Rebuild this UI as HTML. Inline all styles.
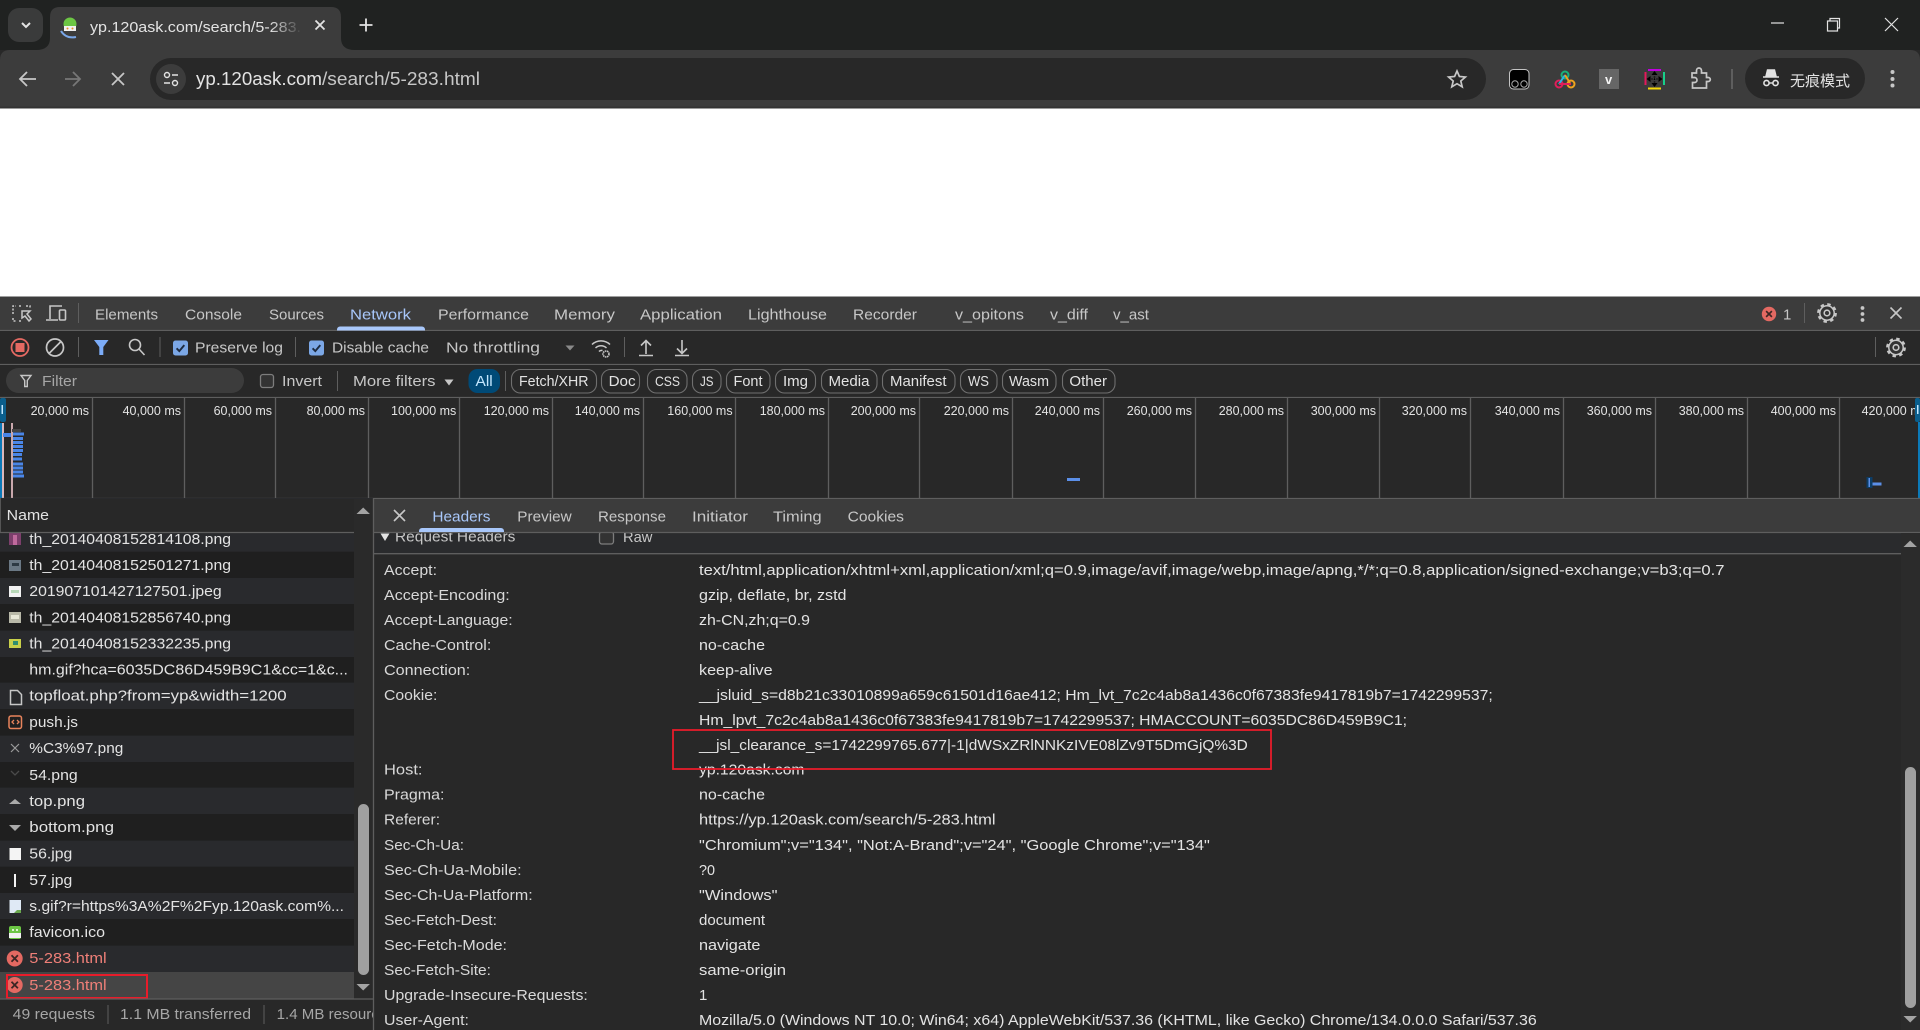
<!DOCTYPE html>
<html lang="zh-CN"><head><meta charset="utf-8"><title>yp.120ask.com/search/5-283.html</title>
<style>
html,body{margin:0;padding:0;background:#282828;width:1920px;height:1030px;overflow:hidden}
svg{display:block}
text{font-family:"Liberation Sans","Noto Sans CJK SC",sans-serif;font-size:15px;fill:#e3e3e3;white-space:pre}
.t{fill:#c7c7c7}
.l{font-size:13px}
.n{fill:#d8d8d8}
.g{fill:#a6a6a6}
.r{fill:#ee7f78}
.ln{stroke:#5e5e5e;stroke-width:1.3;fill:none}
.ic{stroke:#c7c7c7;stroke-width:1.6;fill:none}
</style></head><body>
<svg xmlns="http://www.w3.org/2000/svg" width="1920" height="1030" viewBox="0 0 1920 1030">
<defs>
<linearGradient id="fade" gradientUnits="userSpaceOnUse" x1="270" y1="0" x2="302" y2="0"><stop offset="0" stop-color="#e3e3e3"/><stop offset="1" stop-color="#e3e3e3" stop-opacity="0"/></linearGradient>
<g id="gear"><circle r="8.6" fill="none" stroke="#c7c7c7" stroke-width="2.6" stroke-dasharray="3.4 3.35"/><circle r="7.2" fill="#333" stroke="#c7c7c7" stroke-width="1.5"/><circle r="2.8" fill="none" stroke="#c7c7c7" stroke-width="1.6"/></g>
<g id="chk"><rect width="15" height="15" rx="2.5" fill="#7ba7e6"/><path d="M3.6 7.8l2.7 2.8 5-6" fill="none" stroke="#1d2b40" stroke-width="1.9"/></g>
<g id="err"><circle r="8" fill="#e46962"/><path d="M-3.2-3.2l6.4 6.4M3.2-3.2l-6.4 6.4" stroke="#3c2624" stroke-width="1.8"/></g>
</defs>

<!-- browser chrome -->
<rect width="1920" height="50" fill="#202221"/>
<rect x="8" y="8" width="35" height="34" rx="11" fill="#3a3b3b"/>
<path d="M22 23l4 4 4-4" fill="none" stroke="#e3e3e3" stroke-width="2"/>
<path d="M0 60Q0 50 10 50H1910Q1920 50 1920 60V108H0Z" fill="#3c3c3c"/>
<rect y="106.500" width="1920" height="2" fill="#333"/>
<path d="M36 50Q50 50 50 38V17Q50 7 60 7H331Q341 7 341 17V38Q341 50 355 50Z" fill="#3c3c3c"/>
<circle cx="70" cy="24" r="6.500" fill="#6cc644"/><rect x="64" y="26" width="12" height="5" fill="#f1f1f1"/><circle cx="67.500" cy="28.500" r="1" fill="#e98b2a"/><circle cx="72.500" cy="28.500" r="1" fill="#e98b2a"/>
<path d="M61 31Q66 39 76 37" fill="none" stroke="#7aa7e8" stroke-width="2"/>
<text x="90" y="32" textLength="211" lengthAdjust="spacingAndGlyphs" style="fill:url(#fade)">yp.120ask.com/search/5-283.</text>
<path d="M315.500 20.500l9 9M324.500 20.500l-9 9" stroke="#e3e3e3" stroke-width="1.800"/>
<path d="M366 18.500v13M359.500 25h13" stroke="#e3e3e3" stroke-width="1.800"/>
<path d="M1771 23h13" stroke="#e3e3e3" stroke-width="1.200"/>
<rect x="1827.500" y="21" width="10" height="10" fill="none" stroke="#e3e3e3" stroke-width="1.200"/><path d="M1830 21v-2.500h9.500v9.500h-2" fill="none" stroke="#e3e3e3" stroke-width="1.200"/>
<path d="M1885 18l13 13M1898 18l-13 13" stroke="#e3e3e3" stroke-width="1.200"/>

<path d="M36 79h-16M27 72l-7 7 7 7" fill="none" stroke="#c7c7c7" stroke-width="1.800"/>
<path d="M65 79h15M73 72l7 7-7 7" fill="none" stroke="#777" stroke-width="1.800"/>
<path d="M112 73l12 12M124 73l-12 12" stroke="#c7c7c7" stroke-width="1.800"/>
<rect x="150" y="58" width="1336" height="42" rx="21" fill="#282828"/>
<circle cx="171" cy="79" r="15" fill="#3c3c3c"/>
<circle cx="167" cy="75" r="2.500" fill="none" stroke="#e3e3e3" stroke-width="1.400"/><path d="M172 75h6M164 83h6" stroke="#e3e3e3" stroke-width="1.400"/><circle cx="175" cy="83" r="2.500" fill="none" stroke="#e3e3e3" stroke-width="1.400"/>
<text x="196" y="85" style="font-size:18px" textLength="126" lengthAdjust="spacingAndGlyphs">yp.120ask.com</text>
<text x="322" y="85" style="font-size:18px;fill:#c7c7c7" textLength="158" lengthAdjust="spacingAndGlyphs">/search/5-283.html</text>
<path d="M1457 71l2.400 5.500 6 .5-4.600 4 1.400 5.800-5.200-3.100-5.200 3.100 1.400-5.800-4.600-4 6-.5z" fill="none" stroke="#c7c7c7" stroke-width="1.700"/>

<rect x="1509.500" y="69.500" width="19.500" height="19.500" rx="4" fill="#000" stroke="#c4c4c4" stroke-width="1"/>
<circle cx="1515" cy="84" r="3.200" fill="none" stroke="#a8a8a8" stroke-width="1"/><circle cx="1524" cy="84" r="3.200" fill="none" stroke="#a8a8a8" stroke-width="1"/>
<circle cx="1565" cy="75" r="3.500" fill="none" stroke="#18b27a" stroke-width="2"/>
<circle cx="1559" cy="84" r="3.500" fill="none" stroke="#e01e5a" stroke-width="2"/>
<circle cx="1571" cy="84" r="3.500" fill="none" stroke="#f0a31e" stroke-width="2"/>
<path d="M1565 75l-6 9" stroke="#2ab6e6" stroke-width="2"/><path d="M1565 75l5 8" stroke="#f0a31e" stroke-width="2"/><path d="M1559 84h12" stroke="#e01e5a" stroke-width="2"/>
<rect x="1599" y="69" width="20" height="20" fill="#666"/><text x="1605" y="84" style="font-size:13px;font-weight:bold;fill:#f4f4f4">v</text>
<rect x="1648" y="69" width="13" height="2" fill="#c000e0"/><rect x="1648" y="87.500" width="13" height="2" fill="#f5d90a"/><rect x="1644.500" y="72" width="2" height="13" fill="#e5175c"/><rect x="1663" y="72" width="2" height="13" fill="#18cf8a"/>
<path d="M1654.500 71l3 4h-6zM1654.500 87l3-4h-6zM1646.500 79l4-3v6zM1662.500 79l-4-3v6z" fill="#000"/><path d="M1649 79h11M1654.500 74v10" stroke="#000" stroke-dasharray="1 1.500" stroke-width="1.500"/>
<path d="M1692 73h4.500v-2.500a2.500 2.500 0 0 1 5 0V73h5v4.500h1.800a2 2 0 0 1 0 4h-1.800V88h-14v-5.500h2a2.500 2.500 0 0 0 0-5h-2.500z" fill="none" stroke="#c7c7c7" stroke-width="1.700"/>
<rect x="1731" y="69" width="2" height="20" fill="#5e5e5e"/>
<rect x="1745" y="58" width="120" height="41" rx="20.500" fill="#282828"/>
<path d="M1763 77h16M1766 76l1.500-6h7l1.500 6z" fill="#e3e3e3" stroke="#e3e3e3" stroke-width="1.400"/><circle cx="1766.500" cy="83" r="2.600" fill="none" stroke="#e3e3e3" stroke-width="1.600"/><circle cx="1775.500" cy="83" r="2.600" fill="none" stroke="#e3e3e3" stroke-width="1.600"/><path d="M1769 83h4" stroke="#e3e3e3" stroke-width="1.400"/>
<text x="1790" y="86" textLength="60" lengthAdjust="spacingAndGlyphs">无痕模式</text>
<circle cx="1892.500" cy="72" r="2" fill="#c7c7c7"/><circle cx="1892.500" cy="79" r="2" fill="#c7c7c7"/><circle cx="1892.500" cy="85.500" r="2" fill="#c7c7c7"/>

<!-- page -->
<rect y="108.500" width="1920" height="188" fill="#fff"/>

<!-- devtools tabs -->
<rect y="296.500" width="1920" height="34" fill="#3c3c3c"/>
<path class="ln" d="M0 330.500H1920"/>
<path d="M13 314v-8h3M19 306h3M26 306h4v3M13 318v3h3M19 321h2" fill="none" stroke="#c7c7c7" stroke-width="1.500" stroke-dasharray="2 1.500"/>
<path d="M22 311h8l-3 3 4 5-2 2-4-5-3 2z" fill="none" stroke="#c7c7c7" stroke-width="1.500"/>
<path d="M50 319v-13h12M46 320h12" fill="none" stroke="#c7c7c7" stroke-width="1.600"/><rect x="59.500" y="310" width="6" height="10" rx="1" fill="none" stroke="#c7c7c7" stroke-width="1.600"/>
<rect x="78" y="303" width="1" height="20" fill="#5e5e5e"/>
<text class="t" y="319.500" x="95" textLength="63" lengthAdjust="spacingAndGlyphs">Elements</text>
<text class="t" y="319.500" x="185" textLength="57" lengthAdjust="spacingAndGlyphs">Console</text>
<text class="t" y="319.500" x="269" textLength="55" lengthAdjust="spacingAndGlyphs">Sources</text>
<text y="319.500" x="350" textLength="61" lengthAdjust="spacingAndGlyphs" style="fill:#a8c7fa">Network</text>
<path d="M337 330.500v-1a3 3 0 0 1 3-3h82a3 3 0 0 1 3 3v1z" fill="#a8c7fa"/>
<text class="t" y="319.500" x="438" textLength="91" lengthAdjust="spacingAndGlyphs">Performance</text>
<text class="t" y="319.500" x="554" textLength="61" lengthAdjust="spacingAndGlyphs">Memory</text>
<text class="t" y="319.500" x="640" textLength="82" lengthAdjust="spacingAndGlyphs">Application</text>
<text class="t" y="319.500" x="748" textLength="79" lengthAdjust="spacingAndGlyphs">Lighthouse</text>
<text class="t" y="319.500" x="853" textLength="64" lengthAdjust="spacingAndGlyphs">Recorder</text>
<text class="t" y="319.500" x="955" textLength="69" lengthAdjust="spacingAndGlyphs">v_opitons</text>
<text class="t" y="319.500" x="1050" textLength="38" lengthAdjust="spacingAndGlyphs">v_diff</text>
<text class="t" y="319.500" x="1113" textLength="36" lengthAdjust="spacingAndGlyphs">v_ast</text>
<g transform="translate(1769 314) scale(.9)"><use href="#err"/></g>
<text class="t" x="1783" y="319.500">1</text>
<rect x="1804" y="303" width="1" height="20" fill="#5e5e5e"/>
<g transform="translate(1827 313)"><use href="#gear"/></g>
<circle cx="1862.500" cy="308" r="1.900" fill="#c7c7c7"/><circle cx="1862.500" cy="314" r="1.900" fill="#c7c7c7"/><circle cx="1862.500" cy="320" r="1.900" fill="#c7c7c7"/>
<path d="M1890.500 307.500l11 11M1901.500 307.500l-11 11" stroke="#c7c7c7" stroke-width="1.600"/>

<!-- network toolbar -->
<rect y="331" width="1920" height="33" fill="#282828"/>
<path class="ln" d="M0 364.500H1920"/>
<circle cx="20" cy="347.500" r="8.500" fill="none" stroke="#e46962" stroke-width="1.800"/><rect x="15.500" y="343" width="9" height="9" fill="#e46962"/>
<circle cx="55" cy="347.500" r="8.500" fill="none" stroke="#c7c7c7" stroke-width="1.700"/><path d="M49 353.500l12-12" stroke="#c7c7c7" stroke-width="1.700"/>
<rect x="78" y="337" width="1" height="20" fill="#5e5e5e"/>
<path d="M94 340h14.500l-5.200 7v8h-4v-8z" fill="#7cacf8"/>
<circle cx="135" cy="345" r="5.500" class="ic"/><path d="M139 349l5.500 6" class="ic"/>
<rect x="159.500" y="337" width="1" height="20" fill="#5e5e5e"/>
<use href="#chk" x="173" y="340.500"/>
<text class="t" x="195" y="352.500" textLength="88" lengthAdjust="spacingAndGlyphs">Preserve log</text>
<rect x="295" y="337" width="1" height="20" fill="#5e5e5e"/>
<use href="#chk" x="309" y="340.500"/>
<text class="t" x="332" y="352.500" textLength="97" lengthAdjust="spacingAndGlyphs">Disable cache</text>
<text class="t" x="446" y="352.500" textLength="94" lengthAdjust="spacingAndGlyphs">No throttling</text>
<path d="M565.500 345.500h9l-4.500 5z" fill="#8a8a8a"/>
<path d="M592 344.500a13 13 0 0 1 18 0M595.500 348a8 8 0 0 1 11 0M599 351.500a3.500 3.500 0 0 1 3.500-1" fill="none" stroke="#c7c7c7" stroke-width="1.500"/><circle cx="606" cy="354" r="3" fill="none" stroke="#c7c7c7" stroke-width="1.600" stroke-dasharray="1.500 .6"/>
<rect x="624" y="337" width="1" height="20" fill="#5e5e5e"/>
<path d="M646 354v-13M641 345.500l5-5 5 5M639 355.500h14" fill="none" stroke="#c7c7c7" stroke-width="1.600"/>
<path d="M682 340v13M677 348.500l5 5 5-5M675 355.500h14" fill="none" stroke="#c7c7c7" stroke-width="1.600"/>
<rect x="1875" y="337" width="1" height="20" fill="#5e5e5e"/>
<g transform="translate(1896 347.500)"><use href="#gear"/></g>

<!-- filter row -->
<rect y="365" width="1920" height="32" fill="#282828"/>
<path class="ln" d="M0 397.500H1920"/>
<rect x="6" y="368" width="238" height="25" rx="12.500" fill="#3c3c3c"/>
<path d="M21 375.500h10l-3.700 5v6h-2.600v-6z" fill="none" stroke="#c7c7c7" stroke-width="1.400"/>
<text class="g" x="42" y="386" textLength="35" lengthAdjust="spacingAndGlyphs">Filter</text>
<rect x="260.500" y="374.500" width="13" height="13" rx="2.500" fill="#333" stroke="#7d7d7d" stroke-width="1.300"/>
<text class="t" x="282" y="386" textLength="40" lengthAdjust="spacingAndGlyphs">Invert</text>
<rect x="337" y="371" width="1" height="20" fill="#5e5e5e"/>
<text class="t" x="353" y="386" textLength="82.500" lengthAdjust="spacingAndGlyphs">More filters</text>
<path d="M444.500 379.500h9l-4.500 6z" fill="#c7c7c7"/>
<rect x="468.500" y="369" width="31.500" height="24" rx="9" fill="#004a77"/>
<text x="475.500" y="386" textLength="17.200" lengthAdjust="spacingAndGlyphs" style="fill:#c2e7ff">All</text>
<rect x="505" y="371" width="1" height="20" fill="#5e5e5e"/>
<g fill="none" stroke="#6f6f6f" stroke-width="1.100">
<rect x="511.500" y="369.500" width="85" height="23.500" rx="9"/>
<rect x="601.500" y="369.500" width="38" height="23.500" rx="9"/>
<rect x="647.500" y="369.500" width="39.500" height="23.500" rx="9"/>
<rect x="692.500" y="369.500" width="28.500" height="23.500" rx="9"/>
<rect x="726.500" y="369.500" width="43.500" height="23.500" rx="9"/>
<rect x="775.500" y="369.500" width="40" height="23.500" rx="9"/>
<rect x="821.500" y="369.500" width="55.500" height="23.500" rx="9"/>
<rect x="882.500" y="369.500" width="72.500" height="23.500" rx="9"/>
<rect x="960.500" y="369.500" width="36.500" height="23.500" rx="9"/>
<rect x="1002.500" y="369.500" width="53.500" height="23.500" rx="9"/>
<rect x="1062.500" y="369.500" width="52.500" height="23.500" rx="9"/>
</g>
<text x="519" y="386" textLength="69.500" lengthAdjust="spacingAndGlyphs">Fetch/XHR</text>
<text x="608.600" y="386" textLength="27" lengthAdjust="spacingAndGlyphs">Doc</text>
<text x="655" y="386" style="font-size:14px" textLength="25" lengthAdjust="spacingAndGlyphs">CSS</text>
<text x="700" y="386" style="font-size:14px" textLength="13.500" lengthAdjust="spacingAndGlyphs">JS</text>
<text x="733.500" y="386" textLength="29" lengthAdjust="spacingAndGlyphs">Font</text>
<text x="783" y="386" textLength="25" lengthAdjust="spacingAndGlyphs">Img</text>
<text x="828.500" y="386" textLength="41" lengthAdjust="spacingAndGlyphs">Media</text>
<text x="890" y="386" textLength="56.500" lengthAdjust="spacingAndGlyphs">Manifest</text>
<text x="968" y="386" textLength="21" lengthAdjust="spacingAndGlyphs">WS</text>
<text x="1009" y="386" textLength="40" lengthAdjust="spacingAndGlyphs">Wasm</text>
<text x="1069.400" y="386" textLength="37.600" lengthAdjust="spacingAndGlyphs">Other</text>

<!-- overview -->
<rect y="398" width="1920" height="100" fill="#282828"/>
<path class="ln" d="M92.500 398V498M184.500 398V498M275.500 398V498M368.500 398V498M459.500 398V498M552.500 398V498M643.500 398V498M735.500 398V498M828.500 398V498M919.500 398V498M1012.500 398V498M1103.500 398V498M1195.500 398V498M1287.500 398V498M1379.500 398V498M1470.500 398V498M1563.500 398V498M1655.500 398V498M1747.500 398V498M1839.500 398V498"/>
<text class="l" x="30.600" y="415" textLength="58.400" lengthAdjust="spacingAndGlyphs">20,000 ms</text>
<text class="l" x="122.600" y="415" textLength="58.400" lengthAdjust="spacingAndGlyphs">40,000 ms</text>
<text class="l" x="213.600" y="415" textLength="58.400" lengthAdjust="spacingAndGlyphs">60,000 ms</text>
<text class="l" x="306.600" y="415" textLength="58.400" lengthAdjust="spacingAndGlyphs">80,000 ms</text>
<text class="l" x="391" y="415" textLength="65.300" lengthAdjust="spacingAndGlyphs">100,000 ms</text>
<text class="l" x="483.700" y="415" textLength="65.300" lengthAdjust="spacingAndGlyphs">120,000 ms</text>
<text class="l" x="574.700" y="415" textLength="65.300" lengthAdjust="spacingAndGlyphs">140,000 ms</text>
<text class="l" x="667.300" y="415" textLength="65.300" lengthAdjust="spacingAndGlyphs">160,000 ms</text>
<text class="l" x="759.700" y="415" textLength="65.300" lengthAdjust="spacingAndGlyphs">180,000 ms</text>
<text class="l" x="850.700" y="415" textLength="65.300" lengthAdjust="spacingAndGlyphs">200,000 ms</text>
<text class="l" x="943.700" y="415" textLength="65.300" lengthAdjust="spacingAndGlyphs">220,000 ms</text>
<text class="l" x="1034.700" y="415" textLength="65.300" lengthAdjust="spacingAndGlyphs">240,000 ms</text>
<text class="l" x="1126.700" y="415" textLength="65.300" lengthAdjust="spacingAndGlyphs">260,000 ms</text>
<text class="l" x="1218.700" y="415" textLength="65.300" lengthAdjust="spacingAndGlyphs">280,000 ms</text>
<text class="l" x="1310.700" y="415" textLength="65.300" lengthAdjust="spacingAndGlyphs">300,000 ms</text>
<text class="l" x="1401.700" y="415" textLength="65.300" lengthAdjust="spacingAndGlyphs">320,000 ms</text>
<text class="l" x="1494.700" y="415" textLength="65.300" lengthAdjust="spacingAndGlyphs">340,000 ms</text>
<text class="l" x="1586.700" y="415" textLength="65.300" lengthAdjust="spacingAndGlyphs">360,000 ms</text>
<text class="l" x="1678.700" y="415" textLength="65.300" lengthAdjust="spacingAndGlyphs">380,000 ms</text>
<text class="l" x="1770.700" y="415" textLength="65.300" lengthAdjust="spacingAndGlyphs">400,000 ms</text>
<text class="l" x="1861.600" y="415" textLength="65.300" lengthAdjust="spacingAndGlyphs">420,000 ms</text>
<rect x="0" y="423" width="2" height="75" fill="#0b79b8"/>
<rect x="2" y="423" width="2" height="75" fill="#d9b8bd"/>
<rect x="11" y="423" width="2" height="75" fill="#c9a8ad"/>
<rect x="12" y="429" width="9" height="3" fill="#444"/>
<rect x="3" y="433" width="8" height="4" fill="#4a86e8"/>
<path d="M13 434H24M13 438.500H23M13 442.500H23M13 446.500H23M13 450.500H23M13 454.500H22M13 459H22M13 464H23M13 468H23M13 472H23M13 476H24" stroke="#4a86e8" stroke-width="3"/>
<rect x="0" y="398" width="6" height="24" rx="2" fill="#0b5e8c"/><rect x="1.500" y="405" width="1.500" height="9" fill="#c2e7ff"/>
<rect x="1067" y="478" width="13" height="3" fill="#5b8fe8"/>
<rect x="1866.500" y="477" width="6" height="11" fill="#0d3d66"/><rect x="1868.500" y="478" width="1.500" height="9" fill="#5b8fe8"/><rect x="1872.500" y="482.500" width="9" height="3" fill="#5b8fe8"/>
<rect x="1918" y="422" width="2" height="76" fill="#0b79b8"/>
<rect x="1915" y="398" width="5" height="24" rx="2" fill="#0b5e8c"/><rect x="1917" y="405" width="1.500" height="9" fill="#c2e7ff"/>
<path class="ln" d="M0 498.500H1920"/>

<!-- name pane rows -->
<rect y="498" width="373" height="532" fill="#292a2d"/>
<rect y="525" width="354" height="27" fill="#292a2d"/>
<rect y="551.700" width="354" height="26.300" fill="#1f1f1f"/>
<rect y="578" width="354" height="26" fill="#292a2d"/>
<rect y="604" width="354" height="26.700" fill="#1f1f1f"/>
<rect y="630.700" width="354" height="26.300" fill="#292a2d"/>
<rect y="657" width="354" height="25.700" fill="#1f1f1f"/>
<rect y="682.700" width="354" height="26.300" fill="#292a2d"/>
<rect y="709" width="354" height="26.700" fill="#1f1f1f"/>
<rect y="735.700" width="354" height="26.300" fill="#292a2d"/>
<rect y="762" width="354" height="25.700" fill="#1f1f1f"/>
<rect y="787.700" width="354" height="26.300" fill="#292a2d"/>
<rect y="814" width="354" height="26.700" fill="#1f1f1f"/>
<rect y="840.700" width="354" height="26" fill="#292a2d"/>
<rect y="866.700" width="354" height="26.300" fill="#1f1f1f"/>
<rect y="893" width="354" height="26" fill="#292a2d"/>
<rect y="919" width="354" height="26.700" fill="#1f1f1f"/>
<rect y="945.700" width="354" height="26.300" fill="#292a2d"/>
<rect y="972" width="354" height="26.700" fill="#454545"/>
<rect x="9" y="533" width="12" height="12" fill="#7d3f6c"/><rect x="13" y="535" width="4" height="10" fill="#c06a9d"/>
<rect x="9" y="560" width="12" height="11" fill="#6a7884"/><rect x="12" y="563" width="7" height="3" fill="#2d3a44"/>
<rect x="9" y="586" width="12" height="11" fill="#f2f2f2"/><rect x="11" y="590" width="8" height="3" fill="#b8d8b8"/>
<rect x="9" y="612" width="12" height="11" fill="#b9b9a8"/><rect x="11" y="615" width="8" height="4" fill="#e8e8d8"/>
<rect x="9" y="639" width="12" height="9" fill="#c8d04a"/><rect x="13" y="641" width="5" height="4" fill="#2f8f6f"/>
<path d="M10.500 690.500h7l4 4v10h-11z" fill="none" stroke="#c7c7c7" stroke-width="1.500"/>
<rect x="9" y="716" width="12.500" height="12.500" rx="2" fill="none" stroke="#e8845c" stroke-width="1.500"/><path d="M14 720l-2 2 2 2M17 720l2 2-2 2" fill="none" stroke="#e8845c" stroke-width="1.300"/>
<path d="M11 744l8 8M19 744l-8 8" stroke="#9a9a9a" stroke-width="1.200"/>
<path d="M11 771l4 4 4-4" fill="none" stroke="#4a4a4a" stroke-width="1.300"/>
<path d="M9 804l6-5 6 5z" fill="#aaa"/>
<path d="M9 825l6 6 6-6z" fill="#aaa"/>
<rect x="9.500" y="848" width="11.500" height="12" fill="#f4f4f4"/>
<rect x="14" y="874" width="2" height="13" fill="#f4f4f4"/>
<rect x="9.500" y="900" width="11.500" height="13" fill="#dfe9f5"/><path d="M14 913l3-3h4v3z" fill="#6aa84f"/>
<rect x="9" y="926" width="12" height="13" rx="2" fill="#6cc644"/><rect x="9" y="933" width="12" height="5" fill="#f1f1f1"/><circle cx="13" cy="930" r="1" fill="#fff"/><circle cx="17" cy="930" r="1" fill="#fff"/>
<g transform="translate(14.700 958.500)"><use href="#err"/></g>
<g transform="translate(14.700 985)"><use href="#err"/></g>
<text x="29.300" y="543.800" textLength="201.700" lengthAdjust="spacingAndGlyphs">th_20140408152814108.png</text>
<text x="29.300" y="570" textLength="201.700" lengthAdjust="spacingAndGlyphs">th_20140408152501271.png</text>
<text x="29.300" y="596" textLength="192.400" lengthAdjust="spacingAndGlyphs">201907101427127501.jpeg</text>
<text x="29.300" y="622.300" textLength="201.700" lengthAdjust="spacingAndGlyphs">th_20140408152856740.png</text>
<text x="29.300" y="648.300" textLength="201.700" lengthAdjust="spacingAndGlyphs">th_20140408152332235.png</text>
<text x="29.300" y="674.500" textLength="318.700" lengthAdjust="spacingAndGlyphs">hm.gif?hca=6035DC86D459B9C1&amp;cc=1&amp;c...</text>
<text x="29.300" y="700.500" textLength="257.400" lengthAdjust="spacingAndGlyphs">topfloat.php?from=yp&amp;width=1200</text>
<text x="29.300" y="727" textLength="48.700" lengthAdjust="spacingAndGlyphs">push.js</text>
<text x="29.300" y="753" textLength="94" lengthAdjust="spacingAndGlyphs">%C3%97.png</text>
<text x="29.300" y="779.800" textLength="48.400" lengthAdjust="spacingAndGlyphs">54.png</text>
<text x="29.300" y="806" textLength="55.700" lengthAdjust="spacingAndGlyphs">top.png</text>
<text x="29.300" y="832" textLength="84.700" lengthAdjust="spacingAndGlyphs">bottom.png</text>
<text x="29.300" y="858.500" textLength="43" lengthAdjust="spacingAndGlyphs">56.jpg</text>
<text x="29.300" y="885" textLength="43" lengthAdjust="spacingAndGlyphs">57.jpg</text>
<text x="29.300" y="911" textLength="314.700" lengthAdjust="spacingAndGlyphs">s.gif?r=https%3A%2F%2Fyp.120ask.com%...</text>
<text x="29.300" y="937" textLength="75.700" lengthAdjust="spacingAndGlyphs">favicon.ico</text>
<text class="r" x="29.300" y="963" textLength="77.400" lengthAdjust="spacingAndGlyphs">5-283.html</text>
<text class="r" x="29.300" y="990" textLength="77.400" lengthAdjust="spacingAndGlyphs">5-283.html</text>
<rect x="7" y="975" width="140" height="23" fill="none" stroke="#e81c2a" stroke-width="2"/>
<!-- name header -->
<rect y="499" width="373" height="33.500" fill="#282828"/>
<path class="ln" d="M0 532.500H354"/>
<path d="M0.500 498V532" stroke="#555" stroke-width="1"/>
<text x="6.700" y="520" textLength="42.300" lengthAdjust="spacingAndGlyphs">Name</text>
<rect x="354" y="499" width="19" height="500" fill="#2a2a2a"/>
<path d="M356.500 514l6.700-6.500 6.700 6.500z" fill="#a3a3a3"/>
<rect x="358" y="804" width="11" height="171" rx="5.500" fill="#a0a0a0"/>
<path d="M356.500 984h13.400l-6.700 6.500z" fill="#a3a3a3"/>
<!-- footer -->
<rect y="999" width="373" height="31" fill="#282828"/>
<path class="ln" d="M0 999H373"/>
<text class="g" x="12.700" y="1019" textLength="82.300" lengthAdjust="spacingAndGlyphs">49 requests</text>
<rect x="107.500" y="1005" width="1" height="19" fill="#5e5e5e"/>
<text class="g" x="120" y="1019" textLength="131" lengthAdjust="spacingAndGlyphs">1.1 MB transferred</text>
<rect x="263.500" y="1005" width="1" height="19" fill="#5e5e5e"/>
<text class="g" x="276.700" y="1019" textLength="118" lengthAdjust="spacingAndGlyphs">1.4 MB resources</text>

<!-- details pane -->
<rect x="373" y="499" width="1547" height="531" fill="#282828"/>
<rect x="373" y="533" width="1528" height="21" fill="#2a2b2d"/>
<path d="M380.500 533.500h9l-4.500 7.500z" fill="#e3e3e3"/>
<text class="t" x="395" y="541.700" textLength="120.400" lengthAdjust="spacingAndGlyphs">Request Headers</text>
<rect x="599.500" y="532" width="14" height="12" rx="2.500" fill="#333" stroke="#7d7d7d" stroke-width="1.300"/>
<text class="t" x="623" y="542" textLength="29.400" lengthAdjust="spacingAndGlyphs">Raw</text>
<path class="ln" d="M373 553.700H1901"/>
<!-- detail tabs -->
<rect x="373" y="499" width="1547" height="33" fill="#3c3c3c"/>
<path class="ln" d="M373 532.500H1920"/>
<path d="M373.500 498V1030" stroke="#5e5e5e" stroke-width="1.300"/>
<path d="M394 510l11 11M405 510l-11 11" stroke="#c7c7c7" stroke-width="1.600"/>
<text x="432.400" y="521.700" textLength="58.100" lengthAdjust="spacingAndGlyphs" style="fill:#a8c7fa">Headers</text>
<path d="M419 532v-1a3 3 0 0 1 3-3h79a3 3 0 0 1 3 3v1z" fill="#a8c7fa"/>
<text class="t" x="517.300" y="521.700" textLength="54.400" lengthAdjust="spacingAndGlyphs">Preview</text>
<text class="t" x="598" y="521.700" textLength="68" lengthAdjust="spacingAndGlyphs">Response</text>
<text class="t" x="692" y="521.700" textLength="56" lengthAdjust="spacingAndGlyphs">Initiator</text>
<text class="t" x="773" y="521.700" textLength="48.600" lengthAdjust="spacingAndGlyphs">Timing</text>
<text class="t" x="847.600" y="521.700" textLength="56.400" lengthAdjust="spacingAndGlyphs">Cookies</text>

<!-- header rows -->
<text class="n" x="384" y="575" textLength="53" lengthAdjust="spacingAndGlyphs">Accept:</text>
<text class="n" x="384" y="600" textLength="125.700" lengthAdjust="spacingAndGlyphs">Accept-Encoding:</text>
<text class="n" x="384" y="625" textLength="128.700" lengthAdjust="spacingAndGlyphs">Accept-Language:</text>
<text class="n" x="384" y="650" textLength="107.300" lengthAdjust="spacingAndGlyphs">Cache-Control:</text>
<text class="n" x="384" y="675" textLength="86.300" lengthAdjust="spacingAndGlyphs">Connection:</text>
<text class="n" x="384" y="700" textLength="53.400" lengthAdjust="spacingAndGlyphs">Cookie:</text>
<text class="n" x="384" y="774.500" textLength="38.500" lengthAdjust="spacingAndGlyphs">Host:</text>
<text class="n" x="384" y="799.500" textLength="60.500" lengthAdjust="spacingAndGlyphs">Pragma:</text>
<text class="n" x="384" y="824.500" textLength="56" lengthAdjust="spacingAndGlyphs">Referer:</text>
<text class="n" x="384" y="850" textLength="80" lengthAdjust="spacingAndGlyphs">Sec-Ch-Ua:</text>
<text class="n" x="384" y="875" textLength="137.600" lengthAdjust="spacingAndGlyphs">Sec-Ch-Ua-Mobile:</text>
<text class="n" x="384" y="900" textLength="148.700" lengthAdjust="spacingAndGlyphs">Sec-Ch-Ua-Platform:</text>
<text class="n" x="384" y="925" textLength="113" lengthAdjust="spacingAndGlyphs">Sec-Fetch-Dest:</text>
<text class="n" x="384" y="950" textLength="123" lengthAdjust="spacingAndGlyphs">Sec-Fetch-Mode:</text>
<text class="n" x="384" y="975" textLength="107" lengthAdjust="spacingAndGlyphs">Sec-Fetch-Site:</text>
<text class="n" x="384" y="1000" textLength="203.800" lengthAdjust="spacingAndGlyphs">Upgrade-Insecure-Requests:</text>
<text class="n" x="384" y="1025" textLength="85" lengthAdjust="spacingAndGlyphs">User-Agent:</text>

<text x="699" y="575" textLength="1025.500" lengthAdjust="spacingAndGlyphs">text/html,application/xhtml+xml,application/xml;q=0.9,image/avif,image/webp,image/apng,*/*;q=0.8,application/signed-exchange;v=b3;q=0.7</text>
<text x="699" y="600" textLength="147.500" lengthAdjust="spacingAndGlyphs">gzip, deflate, br, zstd</text>
<text x="699" y="625" textLength="111" lengthAdjust="spacingAndGlyphs">zh-CN,zh;q=0.9</text>
<text x="699" y="650" textLength="66" lengthAdjust="spacingAndGlyphs">no-cache</text>
<text x="699" y="675" textLength="73.600" lengthAdjust="spacingAndGlyphs">keep-alive</text>
<text x="699" y="700" textLength="793.700" lengthAdjust="spacingAndGlyphs">__jsluid_s=d8b21c33010899a659c61501d16ae412; Hm_lvt_7c2c4ab8a1436c0f67383fe9417819b7=1742299537;</text>
<text x="699" y="725" textLength="708" lengthAdjust="spacingAndGlyphs">Hm_lpvt_7c2c4ab8a1436c0f67383fe9417819b7=1742299537; HMACCOUNT=6035DC86D459B9C1;</text>
<text x="699" y="750" textLength="548.800" lengthAdjust="spacingAndGlyphs">__jsl_clearance_s=1742299765.677|-1|dWSxZRlNNKzIVE08lZv9T5DmGjQ%3D</text>
<text x="699" y="774.500" textLength="105.500" lengthAdjust="spacingAndGlyphs">yp.120ask.com</text>
<text x="699" y="799.500" textLength="66" lengthAdjust="spacingAndGlyphs">no-cache</text>
<text x="699" y="824.500" textLength="296.500" lengthAdjust="spacingAndGlyphs">https://yp.120ask.com/search/5-283.html</text>
<text x="699" y="850" textLength="510.800" lengthAdjust="spacingAndGlyphs">"Chromium";v="134", "Not:A-Brand";v="24", "Google Chrome";v="134"</text>
<text x="699" y="875" textLength="16" lengthAdjust="spacingAndGlyphs">?0</text>
<text x="699" y="900" textLength="78.500" lengthAdjust="spacingAndGlyphs">"Windows"</text>
<text x="699" y="925" textLength="66" lengthAdjust="spacingAndGlyphs">document</text>
<text x="699" y="950" textLength="61.400" lengthAdjust="spacingAndGlyphs">navigate</text>
<text x="699" y="975" textLength="87" lengthAdjust="spacingAndGlyphs">same-origin</text>
<text x="699" y="1000">1</text>
<text x="699" y="1025" textLength="837.700" lengthAdjust="spacingAndGlyphs">Mozilla/5.0 (Windows NT 10.0; Win64; x64) AppleWebKit/537.36 (KHTML, like Gecko) Chrome/134.0.0.0 Safari/537.36</text>

<rect x="673" y="730" width="598" height="39" fill="none" stroke="#e81c2a" stroke-width="1.800"/>

<!-- details scrollbar -->
<rect x="1901" y="533" width="19" height="497" fill="#2b2b2b"/>
<path d="M1903.500 547l6.700-6.500 6.700 6.500z" fill="#a3a3a3"/>
<rect x="1905" y="767" width="11" height="241" rx="5.500" fill="#a0a0a0"/>
<path d="M1903.500 1016h13.400l-6.700 6.500z" fill="#a3a3a3"/>
</svg>
</body></html>
